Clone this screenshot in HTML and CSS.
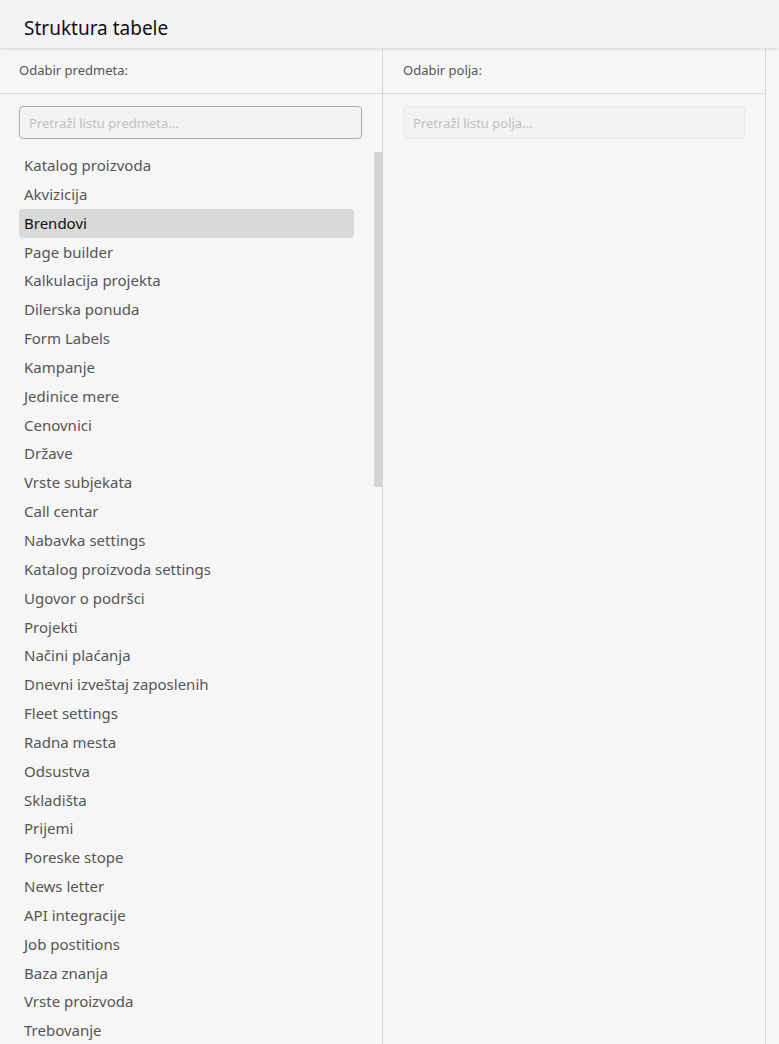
FILE: index.html
```html
<!DOCTYPE html>
<html lang="sr">
  <head>
    <meta charset="UTF-8" />
    <title>Struktura tabele</title>
    <link rel="stylesheet" href="styles.css">
  </head>
  <body>
    <!-- Header -->
    <div class="page-header">Struktura tabele</div>

    <div class="columns">
      <!-- Predmeti -->
      <div class="column">
        <div class="column-title">Odabir predmeta:</div>
        <div class="column-body">
          <input type="text" class="search" placeholder="Pretraži listu predmeta..." />
          <ul class="item-list">
            <li>Katalog proizvoda</li>
            <li>Akvizicija</li>
            <li class="active">Brendovi</li>
            <li>Page builder</li>
            <li>Kalkulacija projekta</li>
            <li>Dilerska ponuda</li>
            <li>Form Labels</li>
            <li>Kampanje</li>
            <li>Jedinice mere</li>
            <li>Cenovnici</li>
            <li>Države</li>
            <li>Vrste subjekata</li>
            <li>Call centar</li>
            <li>Nabavka settings</li>
            <li>Katalog proizvoda settings</li>
            <li>Ugovor o podršci</li>
            <li>Projekti</li>
            <li>Načini plaćanja</li>
            <li>Dnevni izveštaj zaposlenih</li>
            <li>Fleet settings</li>
            <li>Radna mesta</li>
            <li>Odsustva</li>
            <li>Skladišta</li>
            <li>Prijemi</li>
            <li>Poreske stope</li>
            <li>News letter</li>
            <li>API integracije</li>
            <li>Job postitions</li>
            <li>Baza znanja</li>
            <li>Vrste proizvoda</li>
            <li>Trebovanje</li>
          </ul>
          <div class="scroll-thumb"></div>
        </div>
      </div>

      <!-- Polja -->
      <div class="column">
        <div class="column-title">Odabir polja:</div>
        <div class="column-body">
          <input type="text" class="search" placeholder="Pretraži listu polja..." disabled />
        </div>
      </div>
    </div>
  </body>
</html>
```

FILE: styles.css
```css
body {
  font-family: "Noto Sans", sans-serif;
  background: #f6f6f6;
  margin: 0;
  padding: 0;
  height: 1044px;
  overflow: hidden;
  display: flex;
  flex-direction: column;
}

/* Header */
.page-header {
  height: 48px;
  line-height: 56px;
  padding-left: 24px;
  font-size: 19px;
  color: #111;
  background: #f3f3f3;
  box-shadow: 0 1px 3px rgba(0, 0, 0, 0.15);
  position: relative;
  z-index: 2;
  box-sizing: border-box;
}

/* Columns */
.columns {
  flex: 1;
  display: flex;
  padding-top: 1px;
}

.column {
  width: 382px;
  border-right: 1px solid #d4d4d4;
  display: flex;
  flex-direction: column;
}

.column-title {
  height: 44px;
  line-height: 42px;
  padding-left: 19px;
  font-size: 13px;
  color: #555;
  border-bottom: 1px solid #d8d8d8;
}

.column + .column .column-title {
  padding-left: 20px;
}

.column-body {
  position: relative;
  flex: 1;
  padding: 12px 20px 0 19px;
}

.column + .column .column-body {
  padding-left: 20px;
}

.search {
  width: 100%;
  height: 33px;
  box-sizing: border-box;
  padding: 0 9px;
  border: 1px solid #acacac;
  border-radius: 4px;
  background: #f3f3f3;
  font-family: inherit;
  font-size: 13px;
  color: #333;
  outline: none;
}

.search::placeholder {
  color: #c0c0c0;
}

.search:disabled {
  border-color: #e8e8e8;
}

/* List */
.item-list {
  list-style: none;
  margin: 12px 0 0;
  padding: 0;
  width: 335px;
}

.item-list li {
  height: 28.85px;
  line-height: 28.85px;
  padding-left: 5px;
  font-size: 15px;
  color: #555;
  border-radius: 4px;
}

.item-list li.active {
  background: #d9d9d9;
  color: #111;
}

.scroll-thumb {
  position: absolute;
  right: 0;
  top: 58px;
  width: 8px;
  height: 335px;
  background: #d4d4d4;
}
```
